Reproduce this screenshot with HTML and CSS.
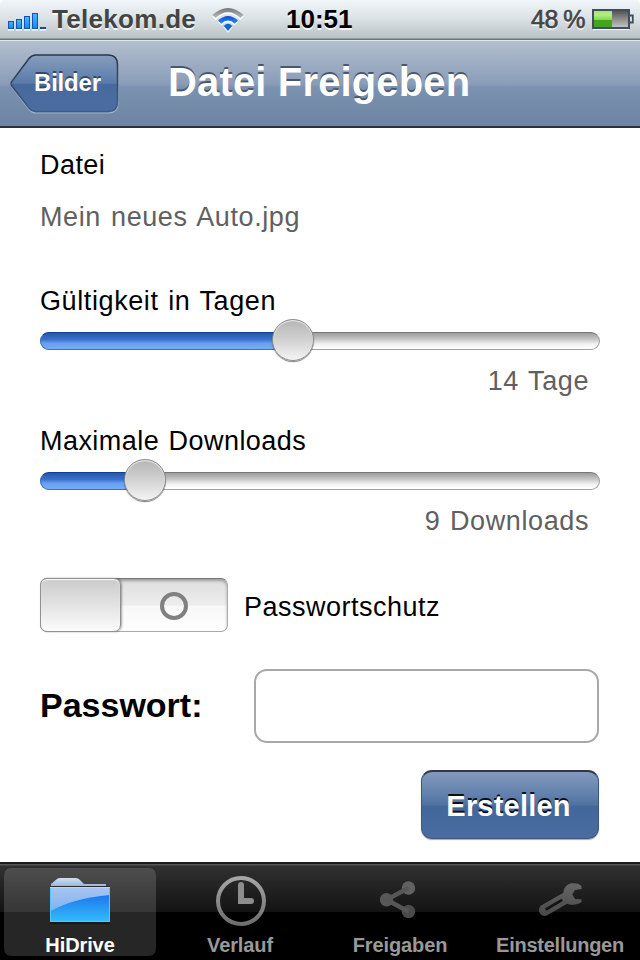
FILE: index.html
```html
<!DOCTYPE html>
<html lang="de">
<head>
<meta charset="utf-8">
<title>Datei Freigeben</title>
<link rel="stylesheet" href="styles.css">
</head>
<body>
<div class="screen">
  <header class="status">
    <div class="status-left">
      <svg class="signal" width="40" height="20" viewBox="0 0 40 20">
        <defs><linearGradient id="sig" x1="0" y1="0" x2="0" y2="1"><stop offset="0" stop-color="#49b8fb"/><stop offset="1" stop-color="#1c85f0"/></linearGradient></defs>
        <path d="M0 18.500h6M8 18.500h6M16 18.500h6M24 18.500h6M32 18.500h6" stroke="#fff" stroke-width="2"/>
        <g fill="url(#sig)" stroke="#1253b8">
          <rect x=".5" y="10.500" width="5" height="7"/>
          <rect x="8.500" y="8.500" width="5" height="9"/>
          <rect x="16.500" y="5.500" width="5" height="12"/>
          <rect x="24.500" y="2.500" width="5" height="15"/>
        </g>
        <rect x="32" y="16" width="6" height="2" fill="#1546b8"/>
      </svg>
      <span class="carrier">Telekom.de</span>
      <svg class="wifi" width="32" height="26" viewBox="0 0 32 26">
        <defs>
          <linearGradient id="wg" x1="0" y1="0" x2="0" y2="1"><stop offset="0" stop-color="#777"/><stop offset="1" stop-color="#bbb"/></linearGradient>
          <linearGradient id="wb" x1="0" y1="0" x2="0" y2="1"><stop offset="0" stop-color="#0b4fd0"/><stop offset="1" stop-color="#2c8cf5"/></linearGradient>
        </defs>
        <g fill="#fff" transform="translate(0 1.300)">
          <path d="M0 7.500Q16-7.500 32 7.500L28.500 10.500Q16-1 3.500 10.500Z"/><path d="M6 13Q16 3.500 26 13L22.500 16Q16 10 9.500 16Z"/><path d="M11.500 18Q16 13.500 20.500 18L16 23.500Z"/>
        </g>
        <path d="M.5 7Q16-7 31.500 7L28.500 10Q16-1.500 3.500 10Z" fill="url(#wg)"/>
        <path d="M6 12.500Q16 3.500 26 12.500L22.800 15.700Q16 9.500 9.200 15.700Z" fill="url(#wb)"/>
        <path d="M11.800 18Q16 13.500 20.200 18L16 23Z" fill="#1263e0"/>
      </svg>
    </div>
    <div class="clock">10:51</div>
    <div class="status-right">
      <span class="percent">48 %</span>
      <svg class="battery" width="42" height="21" viewBox="0 0 42 21">
        <defs>
          <linearGradient id="bg" x1="0" y1="0" x2="0" y2="1"><stop offset="0" stop-color="#9be86d"/><stop offset=".25" stop-color="#b3ee80"/><stop offset=".54" stop-color="#83d84b"/><stop offset=".55" stop-color="#44a51f"/><stop offset="1" stop-color="#43a51c"/></linearGradient>
          <linearGradient id="be" x1="0" y1="0" x2="0" y2="1"><stop offset="0" stop-color="#4e4e4e"/><stop offset=".5" stop-color="#8c8c8c"/><stop offset="1" stop-color="#c9c9c9"/></linearGradient>
        </defs>
        <path d="M1 20.300h36" stroke="#fff"/>
        <rect x="1" y="1" width="36" height="18" fill="url(#be)" stroke="#434d60" stroke-width="2"/>
        <rect x="2" y="2" width="18" height="16" fill="url(#bg)"/>
        <path d="M38 6.500h2.800v7H38" fill="#dde2e6" stroke="#434d60" stroke-width="1.800"/>
      </svg>
    </div>
  </header>

  <nav class="navbar">
    <button class="back">
      <svg class="back-shape" width="110" height="62" viewBox="0 0 110 62">
        <defs>
          <linearGradient id="bk" x1="0" y1="0" x2="0" y2="1"><stop offset="0" stop-color="#879dbd"/><stop offset=".5" stop-color="#597ba9"/><stop offset=".52" stop-color="#48699b"/><stop offset="1" stop-color="#4a6da2"/></linearGradient>
          <linearGradient id="bs" x1="0" y1="0" x2="0" y2="1"><stop offset="0" stop-color="#2b3646"/><stop offset="1" stop-color="#3e5c88"/></linearGradient>
        </defs>
        <path d="M26 2.500H98Q108 2.500 108 12.500V49.500Q108 59 98 59H26Q22 59 19 55.500L1.500 32.500Q.5 31 1.500 29L19 6Q22 2.500 26 2.500Z" fill="none" stroke="#a0b1c8" stroke-width="1.200"/>
        <path d="M26 1H98Q107.500 1 107.500 11V48Q107.500 57.500 98 57.500H26Q22 57.500 19 54L1.500 31.500Q.5 29.800 1.500 28L19 4.500Q22 1 26 1Z" fill="url(#bk)" stroke="url(#bs)" stroke-width="1.500"/>
      </svg>
      <span class="back-text">Bilder</span>
    </button>
    <h1 class="title">Datei Freigeben</h1>
  </nav>

  <main class="content">
    <div class="row">Datei</div>
    <div class="row value file">Mein neues Auto.jpg</div>

    <section class="group">
      <div class="row days-label">Gültigkeit in Tagen</div>
      <div class="slider"><div class="fill days"></div><div class="knob"></div></div>
      <div class="row value right">14 Tage</div>
    </section>
    <section class="group second">
      <div class="row">Maximale Downloads</div>
      <div class="slider"><div class="fill downloads"></div><div class="knob"></div></div>
      <div class="row value right">9 Downloads</div>
    </section>

    <div class="switch-row">
      <div class="switch"><div class="thumb"></div><div class="off"><i class="ring"></i></div></div>
      <span class="switch-label">Passwortschutz</span>
    </div>
    <div class="password-row">
      <label class="password-label" for="pw">Passwort:</label>
      <input class="password" id="pw" type="password">
    </div>
    <button class="create">Erstellen</button>
  </main>

  <footer class="tabs">
    <div class="tab active">
      <svg class="icon" width="76" height="60" viewBox="0 0 76 60">
        <defs>
          <linearGradient id="f1" x1="0" y1="0" x2="0" y2="1"><stop offset="0" stop-color="#a9c6f2"/><stop offset="1" stop-color="#6ba8ee"/></linearGradient>
          <linearGradient id="f2" x1="0" y1="0" x2="0" y2="1"><stop offset="0" stop-color="#1d78ee"/><stop offset="1" stop-color="#35bcfb"/></linearGradient>
          <linearGradient id="f3" x1="0" y1="0" x2="0" y2="1"><stop offset="0" stop-color="#cfdff5"/><stop offset="1" stop-color="#9fb6d8"/></linearGradient>
        </defs>
        <path d="M9 16V14L15 9Q16 8 18 8H34Q36 8 37.500 9.500L42 14H64V16Z" fill="url(#f3)"/>
        <path d="M8 16h60v38H8z" fill="#000" opacity=".35"/>
        <path d="M8 17h60v35H8z" fill="url(#f1)"/>
        <path d="M8 41.500Q31 28 68 25V52H8Z" fill="url(#f2)"/>
        <path d="M8.500 17v34.500h59V17" fill="none" stroke="#59c6fa"/>
        <path d="M8 17.500h60" stroke="#bcd6fb"/>
      </svg>
      <span class="tab-text">HiDrive</span>
    </div>
    <div class="tab">
      <svg class="icon" width="76" height="60" viewBox="0 0 76 60">
        <defs><linearGradient id="cl" gradientUnits="userSpaceOnUse" x1="0" y1="6" x2="0" y2="56"><stop offset="0" stop-color="#a8a8a8"/><stop offset="1" stop-color="#6c6c6c"/></linearGradient></defs>
        <circle cx="39" cy="31" r="23" fill="none" stroke="url(#cl)" stroke-width="4"/>
        <path d="M39 15V31H49" fill="none" stroke="#8d8d8d" stroke-width="6" stroke-linecap="round"/>
      </svg>
      <span class="tab-text">Verlauf</span>
    </div>
    <div class="tab">
      <svg class="icon" width="76" height="60" viewBox="0 0 76 60">
        <g fill="#585858"><circle cx="24.500" cy="29.700" r="6.700"/><circle cx="46.500" cy="18" r="6.700" fill="#626262"/><circle cx="46.500" cy="41.500" r="6.700" fill="#4b4b4b"/></g>
        <path d="M46.500 18L24.500 29.700L46.500 41.500" fill="none" stroke="#565656" stroke-width="4.500"/>
      </svg>
      <span class="tab-text">Freigaben</span>
    </div>
    <div class="tab">
      <svg class="icon" width="76" height="60" viewBox="0 0 76 60">
        <defs><linearGradient id="wr" x1="0" y1="0" x2="0" y2="1"><stop offset="0" stop-color="#666"/><stop offset="1" stop-color="#484848"/></linearGradient></defs>
        <g transform="translate(-202 -15) scale(.33333)">
          <path d="M662 152L730 113C732 94 744 86 757 85Q774 84 784 92L785 102L765 105L757 118L765 132L784 133L785 141C772 151 752 151 741 146L682 181C665 189 648 168 662 152Z" fill="url(#wr)"/>
          <path d="M680 162L724 136" stroke="#141414" stroke-width="8" stroke-linecap="round"/>
        </g>
      </svg>
      <span class="tab-text wide">Einstellungen</span>
    </div>
  </footer>
</div>
</body>
</html>
```

FILE: styles.css
```css
* { box-sizing: border-box; }

body {
  margin: 0;
  background: #000;
  font-family: "Liberation Sans", Arial, sans-serif;
}

button { padding: 0; border: 0; background: none; font-family: inherit; }

.screen {
  width: 640px;
  height: 960px;
  display: flex;
  flex-direction: column;
  background: #fff;
  overflow: hidden;
}

/* Status bar */
.status {
  height: 40px;
  flex: none;
  display: grid;
  grid-template-columns: 278px auto 1fr;
  padding: 0 6px 0 8px;
  background: linear-gradient(#eff5f8, #dce3e6 45%, #bcc4c8 37px, #bac2c6 38px, #6e7478 39px, #6e7478);
  border-radius: 5px 5px 0 0;
  font-size: 26px;
  line-height: 39px;
  text-shadow: 0 2px 0 rgba(255, 255, 255, .75);
}
.status-left, .status-right { display: flex; align-items: flex-start; }
.status-right { justify-content: flex-end; }
.signal { margin-top: 11px; }
.carrier { margin-left: 4px; color: #444; font-weight: bold; letter-spacing: .3px; }
.wifi { margin: 8px 0 0 16px; }
.clock { font-weight: bold; color: #000; }
.percent {
  font-size: 25px;
  color: #444;
  letter-spacing: -.5px;
  word-spacing: -1px;
  -webkit-text-stroke: .6px #444;
}
.battery { margin: 9px 0 0 7px; }

/* Navigation bar */
.navbar {
  height: 88px;
  flex: none;
  display: flex;
  align-items: flex-start;
  padding-left: 10px;
  border-top: 1px solid #e0e7ee;
  border-bottom: 2px solid #2d3037;
  background: linear-gradient(#b2bfce, #8a9db8 50%, #7b91b0 55%, #6d84a2);
}
.back {
  position: relative;
  width: 110px;
  height: 62px;
  margin-top: 13px;
}
.back-shape { display: block; }
.back-text {
  position: absolute;
  left: 24px;
  top: 9px;
  font-size: 24px;
  font-weight: bold;
  line-height: 40px;
  letter-spacing: -.2px;
  color: #fff;
  text-shadow: 0 -2px 0 #354966;
}
.title {
  margin: 11px 0 0 48px;
  font-size: 40px;
  line-height: 60px;
  letter-spacing: .15px;
  color: #fff;
  text-shadow: 0 -2px 0 #4b586b;
  white-space: nowrap;
}

/* Form */
.content {
  flex: 1;
  display: flex;
  flex-direction: column;
  padding: 17px 41px 0 40px;
  font-size: 27px;
  color: #000;
}
.row { height: 40px; line-height: 40px; letter-spacing: .45px; word-spacing: 1.5px; }
.value { color: #606060; }
.file { margin-top: 12px; letter-spacing: .6px; word-spacing: 2px; }
.days-label { letter-spacing: .6px; word-spacing: 1.5px; }
.right { text-align: right; padding-right: 10px; letter-spacing: .6px; }
.group { margin-top: 44px; }
.second { margin-top: 20px; }
.slider {
  display: flex;
  align-items: center;
  width: 560px;
  height: 18px;
  margin: 11px 0;
  border-radius: 9px;
  border: 1px solid #a0a0a0;
  border-top-color: #777;
  background: linear-gradient(#9c9c9c, #c8c8c8 40%, #f2f2f2 70%, #fff);
}
.fill {
  flex: none;
  height: 18px;
  border-radius: 9px 0 0 9px;
  margin-left: -1px;
  border: 1px solid #3a72c4;
  border-top-color: #123f8d;
  background: linear-gradient(#2458ae, #3a70ca 40%, #69a0ef 65%, #73adf8);
}
.days { width: 253px; }
.downloads { width: 105px; }
.knob {
  flex: none;
  width: 42px;
  height: 42px;
  margin: -3px 0 0 -21px;
  border-radius: 50%;
  border: 1px solid #8a8a8a;
  background: linear-gradient(#b5b5b5, #d2d2d2 50%, #f4f4f4);
  box-shadow: inset 0 1px 1px #eee, inset 0 0 1px #fff, 0 1px 1px rgba(0, 0, 0, .5);
}
.switch-row { display: flex; margin-top: 37px; height: 54px; }
.switch {
  display: flex;
  width: 188px;
  height: 54px;
  border-radius: 7px;
  border: 1px solid #aaa;
  border-top-color: #777;
  background: linear-gradient(#dedede, #ededed 50%, #f7f7f7 52%, #fff);
  box-shadow: inset 0 2px 3px rgba(0, 0, 0, .3);
}
.thumb {
  width: 81px;
  height: 54px;
  margin: -1px 0 0 -1px;
  border: 1px solid #909090;
  border-radius: 7px;
  background: linear-gradient(#cbcbcb, #dedede 40%, #fbfbfb);
  box-shadow: inset 0 1px 1px #fff, 1px 0 2px rgba(0, 0, 0, .35);
}
.off { flex: 1; display: flex; align-items: center; justify-content: center; padding-top: 2px; }
.ring { width: 28px; height: 28px; border: 4px solid #808080; border-radius: 50%; }
.switch-label { margin-left: 16px; line-height: 58px; letter-spacing: .5px; }
.password-row { display: flex; justify-content: space-between; height: 74px; margin-top: 37px; }
.password-label { font-size: 34px; font-weight: bold; line-height: 73px; }
.password {
  width: 345px;
  height: 74px;
  border: 2px solid #a8a8a8;
  border-radius: 13px;
  background: #fff;
}
.create {
  align-self: flex-end;
  width: 178px;
  height: 69px;
  margin-top: 27px;
  border: 1px solid #3b5680;
  border-top: 2px solid #2d3849;
  border-radius: 11px;
  background: linear-gradient(#8299bb, #6482ae 32%, #50729f 50%, #44679b 52%, #4a6da1);
  box-shadow: 0 1px 1px #aaa;
  color: #fff;
  font-size: 29px;
  font-weight: bold;
  line-height: 68px;
  letter-spacing: .2px;
  padding-right: 3px;
  text-shadow: 0 -2px 0 #0b1018;
}

/* Tab bar */
.tabs {
  height: 98px;
  flex: none;
  display: grid;
  grid-template-columns: repeat(4, 160px);
  padding-top: 6px;
  background: linear-gradient(#1b1b1b 2px, #555 2px, #555 3px, #303030 4px, #131313 50px, #000 50px);
}
.tab {
  width: 152px;
  height: 88px;
  margin-left: 4px;
  display: flex;
  flex-direction: column;
  align-items: center;
  border-radius: 7px;
  color: #999;
}
.active { color: #fff; background: rgba(255, 255, 255, .15); }
.icon { flex: none; margin-top: 2px; }
.tab-text { font-size: 20px; font-weight: bold; line-height: 30px; letter-spacing: -.1px; white-space: nowrap; }
.wide { letter-spacing: -.25px; }
```
